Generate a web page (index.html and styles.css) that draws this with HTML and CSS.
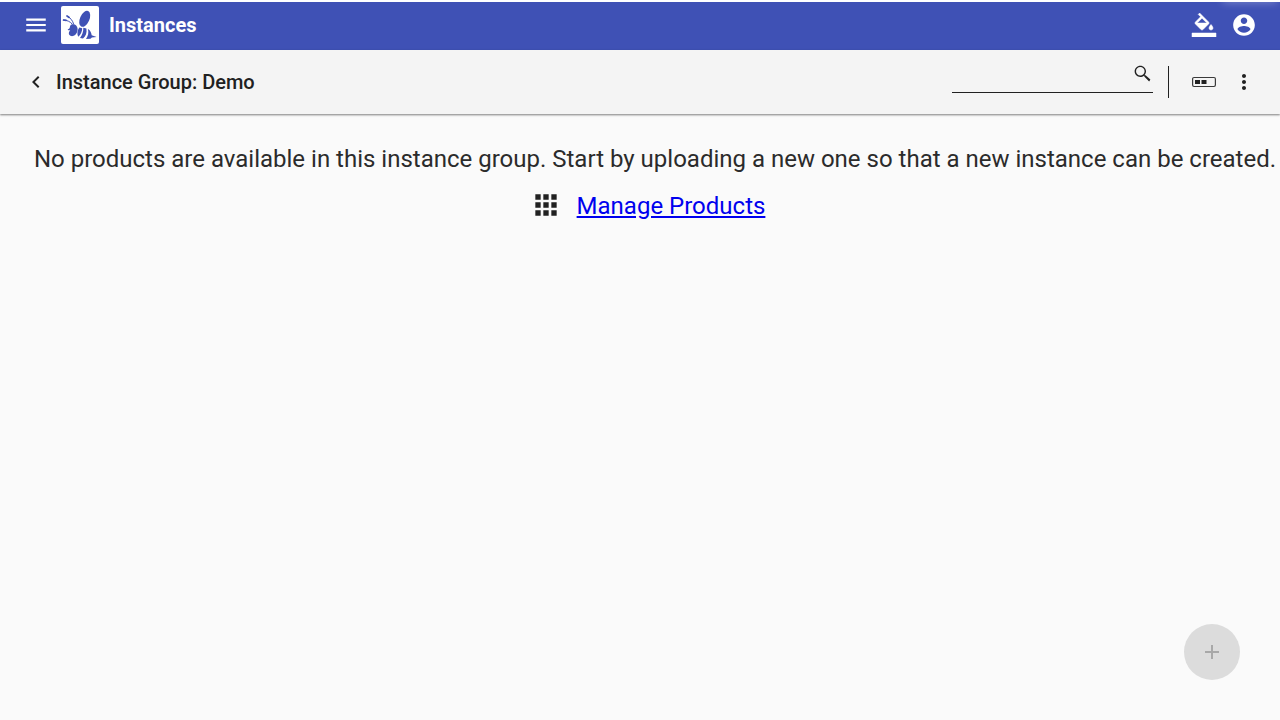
FILE: index.html
```html
<!DOCTYPE html>
<html lang="en">
<head>
<meta charset="utf-8">
<title>Instances</title>
<link rel="stylesheet" href="styles.css">
</head>
<body>
<div class="app">
  <header class="topbar">
    <svg class="icon menu" viewBox="0 0 24 24"><path d="M3 18h18v-2H3v2zm0-5h18v-2H3v2zm0-7v2h18V6H3z"/></svg>
    <svg class="logo" viewBox="0 0 38 38">
      <rect width="38" height="38" rx="2" fill="#fff"/>
      <g fill="#3f51b5">
        <ellipse cx="23.700" cy="12.800" rx="4.700" ry="8.500" transform="rotate(24 23.700 12.800)"/>
        <path d="M11.500 18.200c2.600-.5 4.900 1.700 5.100 4.600c.2 3.700-1.900 6.700-4.900 7.300c-3 .3-4.600-2-3.500-4.400l1-1.500c-1.200.3-2 0-2.600-.8c1.700-.2 2.200-1.200 2.300-2.600c.2-1.400 1.200-2.400 2.600-2.600z"/>
        <path d="M18.300 21.600l2.900.6c0 3.200-1.300 6.200-4 8.600c-1.400-2.600-.9-6.500 1.100-9.200z"/>
        <path d="M22.300 21.700l3.100.7c.7 4-.5 7.700-3.400 10.200l-3-.6c2.500-3.200 3.400-6.600 3.300-10.300z"/>
        <path d="M26.900 23c2.200 1.300 3.400 3.300 3.800 6.300l4.900 1.700l-4.700.6l-1.400 1.200l-4.500.1c2.200-3.100 2.900-6.300 1.900-9.900z"/>
      </g>
      <g fill="none" stroke="#3f51b5" stroke-linecap="round"><path stroke-width="1" d="M6 10c3.500 1.800 5.700 4.500 6.600 8M2.500 14c3.500.1 6.700 1.600 8.700 4"/><path stroke-width="1.600" d="M6 10l2.200 1.500M2.500 14l2.600.4"/></g>
    </svg>
    <h1 class="brand">Instances</h1>
    <div class="actions">
      <svg class="icon fill" viewBox="0 0 24 24"><path d="M16.560 8.940L7.620 0 6.210 1.410l2.380 2.380-5.150 5.150c-.59.590-.59 1.540 0 2.120l5.500 5.500c.29.290.68.440 1.060.44s.77-.15 1.060-.44l5.500-5.500c.59-.58.590-1.530 0-2.120zM5.210 10L10 5.210 14.790 10H5.210zM19 11.500s-2 2.170-2 3.500c0 1.100.9 2 2 2s2-.9 2-2c0-1.330-2-3.500-2-3.500zM0 20h24v4H0z"/></svg>
      <svg class="icon account" viewBox="0 0 24 24"><path d="M12 2C6.480 2 2 6.480 2 12s4.480 10 10 10 10-4.480 10-10S17.520 2 12 2zm0 3c1.660 0 3 1.340 3 3s-1.340 3-3 3-3-1.340-3-3 1.340-3 3-3zm0 14.200c-2.500 0-4.710-1.280-6-3.220.03-1.990 4-3.080 6-3.080 1.990 0 5.970 1.090 6 3.080-1.290 1.940-3.500 3.220-6 3.220z"/></svg>
    </div>
    <span class="glow"></span>
  </header>
  <div class="toolbar">
    <svg class="icon back" viewBox="0 0 24 24"><path d="M15.410 7.410L14 6l-6 6 6 6 1.410-1.410L10.830 12z"/></svg>
    <h2 class="title">Instance Group: Demo</h2>
    <div class="search"><svg class="search-icon" viewBox="0 0 24 24"><path d="M15.500 14h-.79l-.28-.27C15.410 12.590 16 11.110 16 9.500 16 5.910 13.090 3 9.500 3S3 5.910 3 9.500 5.910 16 9.500 16c1.610 0 3.090-.59 4.230-1.570l.27.280v.79l5.600 5.600L21 18.900zM9.500 14.400C6.800 14.400 4.600 12.200 4.600 9.500S6.800 4.600 9.500 4.600s4.900 2.200 4.900 4.900-2.200 4.900-4.900 4.900z"/></svg></div>
    <span class="divider"></span>
    <svg class="icon status" viewBox="0 0 24 24"><rect x=".6" y="7.500" width="22.800" height="9" rx="1.400" fill="none" stroke="#3a3a3a" stroke-width="1.200"/><path d="M3 10h5v4H3zM9.500 10h5v4h-5z"/></svg>
    <svg class="icon more" viewBox="0 0 24 24"><path d="M12 8c1.100 0 2-.9 2-2s-.9-2-2-2-2 .9-2 2 .9 2 2 2zm0 2c-1.100 0-2 .9-2 2s.9 2 2 2 2-.9 2-2-.9-2-2-2zm0 6c-1.100 0-2 .9-2 2s.9 2 2 2 2-.9 2-2-.9-2-2-2z"/></svg>
  </div>
  <main class="content">
    <p class="message">No products are available in this instance group. Start by uploading a new one so that a new instance can be created.</p>
    <div class="manage">
      <svg class="apps" viewBox="0 0 24 24"><path d="M4 8h4V4H4v4zm6 12h4v-4h-4v4zm-6 0h4v-4H4v4zm0-6h4v-4H4v4zm6 0h4v-4h-4v4zm6-10v4h4V4h-4zm-6 4h4V4h-4v4zm6 6h4v-4h-4v4zm0 6h4v-4h-4v4z"/></svg>
      <a class="link" href="#">Manage Products</a>
    </div>
  </main>
  <button class="fab" disabled><svg class="icon" viewBox="0 0 24 24"><path d="M19 13h-6v6h-2v-6H5v-2h6V5h2v6h6v2z"/></svg></button>
</div>
</body>
</html>
```
FILE: styles.css
```css
* { box-sizing: border-box; }
body { margin: 0; font-family: Roboto, "Liberation Sans", sans-serif; color: #212121; background: #fafafa; overflow: hidden; }
.app { height: 720px; display: flex; flex-direction: column; position: relative; }
.icon { width: 24px; height: 24px; fill: currentColor; flex: none; display: block; }
.topbar { height: 50px; flex: none; border-top: 2px solid #fff; background: #3f51b5; color: #fff; display: flex; align-items: center; padding: 0 23px; position: relative; overflow: hidden; }
.menu { width: 26px; height: 26px; margin-top: -2px; }
.logo { width: 38px; height: 38px; margin: -2px 10px 0 12px; }
.brand { margin: -2px 0 0; font-size: 20px; line-height: 24px; font-weight: 700; }
.actions { margin: -2px 0 0 auto; display: flex; align-items: center; gap: 14px; }
.fill { width: 26px; height: 24px; stroke: currentColor; stroke-width: .5; }
.account { width: 26px; height: 26px; }
.glow { position: absolute; right: 5px; top: -4px; width: 50px; height: 2px; box-shadow: 0 0 8px 2px rgba(255,255,255,.4); }
.toolbar { height: 64px; flex: none; background: #f4f4f4; display: flex; align-items: center; padding: 0 24px; box-shadow: 0 1px 2px rgba(0,0,0,.5); position: relative; }
.title { margin: 0 auto 0 8px; font-size: 20px; line-height: 32px; font-weight: 500; }
.search { width: 201px; height: 33px; margin: -11px 15px 0 0; padding: 3px 0 0; border-bottom: 1px solid #212121; display: flex; justify-content: flex-end; }
.search-icon { width: 21px; height: 21px; fill: #212121; }
.divider { width: 1px; height: 32px; background: #212121; margin-right: 23px; }
.more { margin-left: 16px; }
.content { padding: 29px 0 0 30px; font-size: 24px; line-height: 32px; text-align: center; color: #2b2b2b; }
.message { margin: 0; white-space: nowrap; }
.manage { display: flex; justify-content: center; align-items: flex-start; margin-top: 14px; padding-right: 15px; gap: 15px; }
.apps { width: 32px; height: 32px; fill: #212121; }
.link { color: #0000ee; text-decoration: underline; margin-top: 1px; }
.fab { position: absolute; right: 40px; bottom: 40px; width: 56px; height: 56px; padding: 0; border: 0; border-radius: 50%; background: #dcdcdc; color: #a8a8a8; display: flex; align-items: center; justify-content: center; }
```
